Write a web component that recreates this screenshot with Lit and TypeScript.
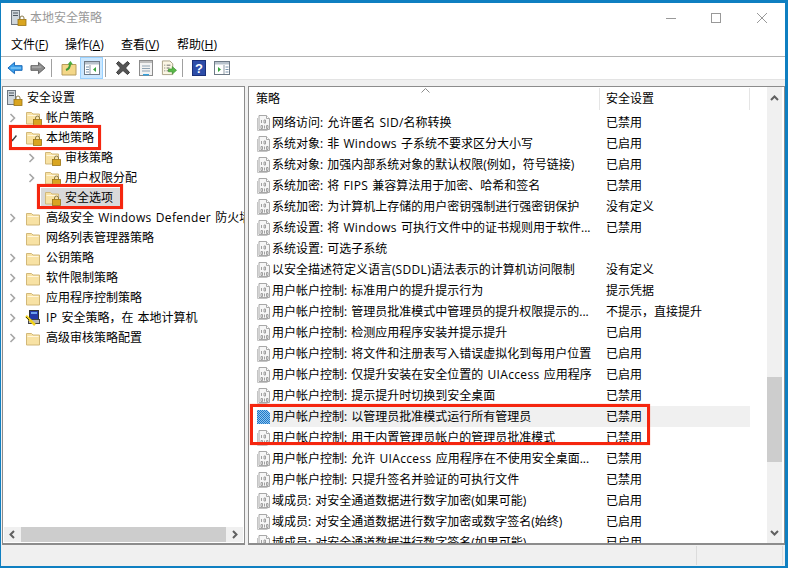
import { LitElement, html, css, svg, nothing } from "lit";
import { customElement } from "lit/decorators.js";

const lock = (x: number, y: number) => svg`
  <path d="M${x + 2} ${y + 3.5}V${y + 2}a2 2 0 0 1 4 0V${y + 3.5}" fill="none" stroke="#8a7a4a" stroke-width="1"/>
  <rect x="${x}" y="${y + 3.5}" width="8" height="6" fill="#d9a520" stroke="#9a7414" stroke-width=".8"/>`;

const folderBase = svg`
  <path d="M1.5 3.5h5l1.5 1.500h6.500v10h-13z" fill="#f8e2a4" stroke="#d2b878"/>
  <path d="M2.500 6.500h11" stroke="#fff6dc"/>`;

const icons = {
  folder: html`<svg class="i16" viewBox="0 0 16 16">${folderBase}</svg>`,
  folderLock: html`<svg class="i18" viewBox="0 0 18 18">${folderBase}${lock(8.500, 7)}</svg>`,
  server: html`<svg class="i18" viewBox="0 0 18 18">
    <rect x="1.500" y="1.500" width="8" height="14" fill="#cfd6dc" stroke="#6f7780"/>
    <path d="M3 4h5M3 6.500h5" stroke="#4d5660"/>
    ${lock(8, 7)}</svg>`,
  ipsec: html`<svg class="i18" viewBox="0 0 18 18">
    <rect x="4.500" y="1.500" width="9" height="9" fill="#2438a8" stroke="#333"/>
    <rect x="6" y="3" width="6" height="2" fill="#6ea0ee"/>
    <rect x="3.500" y="10.500" width="11" height="4" fill="#b8b8b8" stroke="#444"/>
    <path d="M1 7l9 9" stroke="#f2d21c" stroke-width="2.500"/>
    <path d="M1 8l3 3" stroke="#111" stroke-width=".8"/></svg>`,
  policy: html`<svg class="i16" viewBox="0 0 16 16">
    <path d="M1.500 3v12.500h10" fill="none" stroke="#c4c4c4"/>
    <path d="M3 .5h7.500l3 3v11H3z" fill="#f6f6f6" stroke="#a8a8a8"/>
    <path d="M10.500 .5v3h3" fill="#fff" stroke="#a8a8a8"/>
    <path d="M5.500 5v3M8 5h1.500v3H8zM5 10.500h1.500v3H5zM8.500 10.500v3M10.500 10.500h1.500v3h-1.500z" fill="none" stroke="#a0a0a0"/>
  </svg>`,
  policySel: html`<svg class="i16" viewBox="0 0 16 16">
    <defs><pattern id="dith" width="2" height="2" patternUnits="userSpaceOnUse">
      <rect width="2" height="2" fill="#1f78c8"/><rect width="1" height="1" fill="#8fc4ee"/><rect x="1" y="1" width="1" height="1" fill="#8fc4ee"/>
    </pattern></defs>
    <path d="M1 1h10l3 3v11H1z" fill="url(#dith)"/></svg>`,
};

const tbIcons = [
  html`<svg viewBox="0 0 17 14" class="tb"><path d="M1 7l7-6v3.500h8v5H8V13z" fill="#3aa0ec" stroke="#1666b8"/><path d="M4 7h11" stroke="#a7dcfb"/></svg>`,
  html`<svg viewBox="0 0 17 14" class="tb"><path d="M16 7L9 1v3.500H1v5h8V13z" fill="#8d8d8d" stroke="#606060"/><path d="M2 6h10" stroke="#bdbdbd"/></svg>`,
  html`<svg viewBox="0 0 16 16" class="tb"><path d="M1 4.500h14v10.500H1z" fill="#f4d788" stroke="#b79c5c"/><path d="M5 10c3-1 4-3 4-6" fill="none" stroke="#3d9a34" stroke-width="2"/><path d="M6.500 4.500L9.500 1l2.500 3.500z" fill="#4cae3e"/></svg>`,
  html`<svg viewBox="0 0 16 14" class="tb"><rect x=".5" y=".5" width="15" height="13" fill="#fff" stroke="#6e7a86"/><rect x="1" y="1" width="14" height="2.500" fill="#b8c2cc"/><path d="M6 4v9" stroke="#8f9aa5"/><path d="M2 6h3M2 8.500h3M2 11h3" stroke="#7893ad"/><path d="M12 6v5l-3-2.500z" fill="#35a43a"/></svg>`,
  html`<svg viewBox="0 0 16 16" class="tb"><path d="M1.500 3.500L3.500 1.500 8 5.500l4.500-4 2 2L10.500 8l4 4.500-2 2L8 10.500l-4.500 4-2-2L5.500 8z" fill="#555" stroke="#3c3c3c"/></svg>`,
  html`<svg viewBox="0 0 16 16" class="tb"><rect x="1.500" y=".5" width="13" height="15" fill="#f2f2f2" stroke="#8b8b8b"/><rect x="2" y="1" width="12" height="2" fill="#bcbcbc"/><path d="M4 6h8M4 8.500h8M4 11h8" stroke="#8fa3b3"/><rect x="5" y="14" width="6" height="1.500" fill="#35a0dc"/></svg>`,
  html`<svg viewBox="0 0 17 16" class="tb"><path d="M1.500.5h8l3 3v11.500h-11z" fill="#fbf6e4" stroke="#a79f84"/><path d="M3.500 5h1M6 5h4M3.500 8h1M6 8h3M3.500 11h1M6 11h3" stroke="#666"/><path d="M8 9h4V6.500l4.500 4-4.500 4V12H8z" fill="#58b947" stroke="#3b8f30" stroke-width=".7"/></svg>`,
  html`<svg viewBox="0 0 14 16" class="tb"><rect x=".5" y=".5" width="13" height="15" fill="#2d4da8" stroke="#1a2f78"/><text x="7" y="13" text-anchor="middle" font-size="13" font-weight="700" font-family="Liberation Sans" fill="#fff">?</text></svg>`,
  html`<svg viewBox="0 0 16 14" class="tb"><rect x=".5" y=".5" width="15" height="13" fill="#fff" stroke="#6e7a86"/><rect x="1" y="1" width="14" height="2.500" fill="#b8c2cc"/><path d="M10 4v9" stroke="#8f9aa5"/><path d="M11.500 6h3M11.500 8.500h3M11.500 11h3" stroke="#7893ad"/><path d="M4 6v5l3-2.500z" fill="#35a43a"/></svg>`,
];

const right = html`<svg class="chev" viewBox="0 0 8 10"><path d="M1.500 1l4 4-4 4" fill="none" stroke="#a6a6a6" stroke-width="1.600"/></svg>`;
const down = html`<svg class="chev" viewBox="0 0 8 10"><path d="M.5 4.500l3 3 4-5" fill="none" stroke="#404040" stroke-width="1.500"/></svg>`;

type Tree = { t: string; lv: number; a?: "r" | "d"; ic: keyof typeof icons; sel?: boolean };
const tree: Tree[] = [
  { t: "安全设置", lv: 0, ic: "server" },
  { t: "帐户策略", lv: 1, a: "r", ic: "folderLock" },
  { t: "本地策略", lv: 1, a: "d", ic: "folderLock" },
  { t: "审核策略", lv: 2, a: "r", ic: "folderLock" },
  { t: "用户权限分配", lv: 2, a: "r", ic: "folderLock" },
  { t: "安全选项", lv: 2, ic: "folderLock", sel: true },
  { t: "高级安全 Windows Defender 防火墙", lv: 1, a: "r", ic: "folder" },
  { t: "网络列表管理器策略", lv: 1, ic: "folder" },
  { t: "公钥策略", lv: 1, a: "r", ic: "folder" },
  { t: "软件限制策略", lv: 1, a: "r", ic: "folder" },
  { t: "应用程序控制策略", lv: 1, a: "r", ic: "folder" },
  { t: "IP 安全策略，在 本地计算机", lv: 1, a: "r", ic: "ipsec" },
  { t: "高级审核策略配置", lv: 1, a: "r", ic: "folder" },
];

const rows: [string, string][] = [
  ["网络访问: 允许匿名 SID/名称转换", "已禁用"],
  ["系统对象: 非 Windows 子系统不要求区分大小写", "已启用"],
  ["系统对象: 加强内部系统对象的默认权限(例如，符号链接)", "已启用"],
  ["系统加密: 将 FIPS 兼容算法用于加密、哈希和签名", "已禁用"],
  ["系统加密: 为计算机上存储的用户密钥强制进行强密钥保护", "没有定义"],
  ["系统设置: 将 Windows 可执行文件中的证书规则用于软件...", "已禁用"],
  ["系统设置: 可选子系统", ""],
  ["以安全描述符定义语言(SDDL)语法表示的计算机访问限制", "没有定义"],
  ["用户帐户控制: 标准用户的提升提示行为", "提示凭据"],
  ["用户帐户控制: 管理员批准模式中管理员的提升权限提示的...", "不提示，直接提升"],
  ["用户帐户控制: 检测应用程序安装并提示提升", "已启用"],
  ["用户帐户控制: 将文件和注册表写入错误虚拟化到每用户位置", "已启用"],
  ["用户帐户控制: 仅提升安装在安全位置的 UIAccess 应用程序", "已启用"],
  ["用户帐户控制: 提示提升时切换到安全桌面", "已禁用"],
  ["用户帐户控制: 以管理员批准模式运行所有管理员", "已禁用"],
  ["用户帐户控制: 用于内置管理员帐户的管理员批准模式", "已禁用"],
  ["用户帐户控制: 允许 UIAccess 应用程序在不使用安全桌面...", "已禁用"],
  ["用户帐户控制: 只提升签名并验证的可执行文件", "已禁用"],
  ["域成员: 对安全通道数据进行数字加密(如果可能)", "已启用"],
  ["域成员: 对安全通道数据进行数字加密或数字签名(始终)", "已启用"],
  ["域成员: 对安全通道数据进行数字签名(如果可能)", "已启用"],
];

const arrow = (d: string) => html`<svg class="sa" viewBox="0 0 9 9"><path d="${d}" fill="none" stroke="#606060" stroke-width="2"/></svg>`;

/* Latin runs sit a little wider in the reference than in the installed face. */
const lat = (s: string) =>
  s.split(/([A-Za-z]{2,})/).map((p, i) => (i % 2 ? html`<span class="lat">${p}</span>` : p));

@customElement("app-root")
export class AppRoot extends LitElement {
  static styles = css`
    :host {
      display: block; position: relative; width: 788px; height: 568px; overflow: hidden;
      background: #0f7fc1; padding: 3px 3px 2px 1px; box-sizing: border-box;
      font: 12px/16px "Open Sans", "Noto Sans CJK SC", sans-serif; color: #000;
    }
    .lat { letter-spacing: .35px; }
    .win { height: 563px; background: #f0f0f0; display: flex; flex-direction: column; }
    .title { height: 30px; background: #fff; display: flex; align-items: center; padding: 0 0 0 9px; color: #999; flex: none; }
    .title .i18 { margin-right: 2px; }
    .title span { flex: 1; }
    .wc { display: flex; width: 137px; height: 30px; align-items: center; flex: none; }
    .wc svg { width: 12px; height: 12px; display: block; }
    .wc div { width: 45.500px; display: flex; justify-content: center; }
    .menu { height: 23px; background: #fff; display: flex; align-items: center; padding-left: 10px; gap: 16px; flex: none; border-bottom: 1px solid #b4b4b4; }
    .menu span { width: 40px; white-space: nowrap; }
    .menu span:first-child { width: 38px; }
    .menu u { text-underline-offset: 1px; }
    .toolbar { height: 22px; background: #fff; display: flex; align-items: center; padding-left: 2px; flex: none; border-bottom: 1px solid #e3e3e3; }
    .tb { width: 16px; height: 16px; display: block; }
    .btn { width: 23px; height: 22px; display: flex; align-items: center; justify-content: center; flex: none; box-sizing: border-box; }
    .btn.on { background: #cce8ff; border: 1px solid #99d1ff; }
    .sep { width: 1px; height: 18px; background: #a0a0a0; flex: none; margin-left: 2px; }
    .gap5 { margin-left: 5px; }
    .gap4 { margin-left: 4px; }
    .panes { flex: 1; min-height: 0; display: flex; padding: 6px 0 0 1px; gap: 3px; }
    .pane { background: #fff; border: solid #8c8c8c; border-width: 1px 1px 2px 1px; box-sizing: border-box; height: 459px; overflow: hidden; flex: none; }
    .left { width: 243px; display: flex; flex-direction: column; }
    .tree { flex: 1; padding-top: 1px; overflow: hidden; }
    .trow { height: 20px; display: flex; align-items: center; white-space: nowrap; }
    .trow .ar { width: 8px; height: 10px; margin-right: 8px; flex: none; }
    .chev { width: 8px; height: 10px; display: block; }
    .l0 { padding-left: 3px; } .l1 { padding-left: 6px; } .l2 { padding-left: 25px; }
    .i16 { width: 16px; height: 16px; flex: none; display: block; }
    .i18 { width: 18px; height: 18px; flex: none; display: block; }
    .trow .i18 { margin-right: -2px; }
    .trow .lbl { margin-left: 4px; padding: 0 4px 0 1px; height: 20px; line-height: 20px; word-spacing: 1px; }
    .selbg { background: #d9d9d9; display: flex; align-items: center; height: 20px; margin-left: -3px; padding: 0 0 0 3px; width: 79px; box-sizing: border-box; }
    .hs { height: 15px; display: flex; background: #f0f0f0; align-items: center; margin: 0 1px 1px 1px; flex: none; }
    .hs .sab { width: 17px; display: flex; justify-content: center; flex: none; }
    .hs .th { flex: 1; height: 15px; background: #cdcdcd; }
    .sa { width: 9px; height: 9px; display: block; }
    .rightp { width: 537px; display: flex; }
    .main { flex: 1; min-width: 0; overflow: hidden; }
    .head { height: 24px; display: flex; position: relative; }
    .head > div { display: flex; align-items: center; box-sizing: border-box; border-right: 1px solid #e5e5e5; margin: 1px 0; }
    .c1 { width: 351px; flex: none; padding-left: 7px; }
    .c2 { width: 150px; flex: none; padding-left: 6px; }
    .caret { position: absolute; left: 172px; top: 1px; width: 9px; height: 5px; }
    .row { height: 21px; display: flex; align-items: center; white-space: nowrap; }
    .row .n { width: 351px; flex: none; display: flex; align-items: center; padding-left: 7px; box-sizing: border-box; height: 21px; overflow: hidden; }
    .row .n .tx { height: 21px; line-height: 21px; flex: 1; margin-left: -2px; padding-left: 2px; word-spacing: 1px; }
    .row .v { padding-left: 6px; width: 150px; box-sizing: border-box; height: 21px; line-height: 21px; flex: none; }
    .row.hl .tx, .row.hl .v { background: #f0f0f0; }
    .list { padding-top: 1px; height: 432px; overflow: hidden; }
    .vs { width: 15px; margin: 0 2px 0 17px; flex: none; background: #f0f0f0; display: flex; flex-direction: column; align-items: center; }
    .vs .sab { height: 22px; display: flex; align-items: center; justify-content: center; flex: none; }
    .vs .gap { height: 268px; flex: none; }
    .vs .th { height: 85px; width: 15px; background: #cdcdcd; flex: none; }
    .vs .fill { flex: 1; }
    .status { height: 22px; flex: none; display: flex; padding-top: 2px; box-sizing: border-box; }
    .status div { border-right: 1px solid #dcdcdc; box-sizing: border-box; height: 19px; }
    .s1 { width: 696px; } .s2 { width: 86px; }
    .mark { position: absolute; border: 3px solid #f5260f; box-sizing: border-box; box-shadow: 0 0 1px #f8907c; }
    .m1 { left: 9px; top: 125px; width: 92px; height: 25px; }
    .m2 { left: 37px; top: 184px; width: 86px; height: 25px; }
    .m3 { left: 250px; top: 404px; width: 400px; height: 41px; }
  `;

  render() {
    return html`
      <div class="win">
        <div class="title">
          ${icons.server}<span>本地安全策略</span>
          <div class="wc">
            <div><svg viewBox="0 0 12 12"><path d="M1 6.500h10" stroke="#999"/></svg></div>
            <div><svg viewBox="0 0 12 12"><rect x="1.500" y="1.500" width="9" height="9" fill="none" stroke="#999"/></svg></div>
            <div><svg viewBox="0 0 12 12"><path d="M1 1l10 10M11 1L1 11" stroke="#999"/></svg></div>
          </div>
        </div>
        <div class="menu">
          <span>文件(<u>F</u>)</span><span>操作(<u>A</u>)</span><span>查看(<u>V</u>)</span><span>帮助(<u>H</u>)</span>
        </div>
        <div class="toolbar">
          <div class="btn">${tbIcons[0]}</div>
          <div class="btn">${tbIcons[1]}</div>
          <div class="sep"></div>
          <div class="btn gap5">${tbIcons[2]}</div>
          <div class="btn on">${tbIcons[3]}</div>
          <div class="sep"></div>
          <div class="btn gap5">${tbIcons[4]}</div>
          <div class="btn">${tbIcons[5]}</div>
          <div class="btn">${tbIcons[6]}</div>
          <div class="sep"></div>
          <div class="btn gap4">${tbIcons[7]}</div>
          <div class="btn">${tbIcons[8]}</div>
        </div>
        <div class="panes">
          <div class="pane left">
            <div class="tree">
              ${tree.map((n) => html`
                <div class="trow l${n.lv}">
                  ${n.lv === 0 ? nothing : html`<div class="ar">${n.a === "r" ? right : n.a === "d" ? down : nothing}</div>`}
                  ${n.sel
                    ? html`<div class="selbg">${icons[n.ic]}<span class="lbl">${n.t}</span></div>`
                    : html`${icons[n.ic]}<span class="lbl">${lat(n.t)}</span>`}
                </div>`)}
            </div>
            <div class="hs">
              <div class="sab">${arrow("M6 1L2.500 4.500 6 8")}</div>
              <div class="th"></div>
              <div class="sab">${arrow("M3 1l3.500 3.500L3 8")}</div>
            </div>
          </div>
          <div class="pane rightp">
            <div class="main">
              <div class="head">
                <div class="c1">策略</div><div class="c2">安全设置</div>
                <svg class="caret" viewBox="0 0 9 5"><path d="M.5 4.500l4-4 4 4" fill="none" stroke="#8c8c8c"/></svg>
              </div>
              <div class="list">
                ${rows.map((r, i) => html`
                  <div class="row ${i === 14 ? "hl" : ""}">
                    <div class="n">${i === 14 ? icons.policySel : icons.policy}<span class="tx">${lat(r[0])}</span></div>
                    <div class="v">${r[1]}</div>
                  </div>`)}
              </div>
            </div>
            <div class="vs">
              <div class="sab">${arrow("M1 6l3.500-3.500L8 6")}</div>
              <div class="gap"></div>
              <div class="th"></div>
              <div class="fill"></div>
              <div class="sab">${arrow("M1 3l3.500 3.500L8 3")}</div>
            </div>
          </div>
        </div>
        <div class="status"><div class="s1"></div><div class="s2"></div></div>
      </div>
      <div class="mark m1"></div>
      <div class="mark m2"></div>
      <div class="mark m3"></div>
    `;
  }
}
